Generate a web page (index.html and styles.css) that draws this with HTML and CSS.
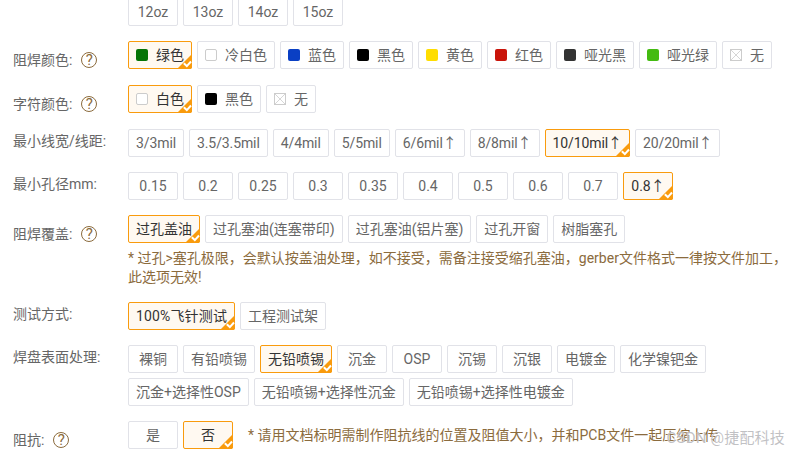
FILE: index.html
```html
<!DOCTYPE html>
<html lang="zh-CN">
<head>
<meta charset="utf-8">
<title>PCB 工艺参数</title>
<link rel="stylesheet" href="styles.css">
</head>
<body>
<svg class="defs" width="0" height="0" aria-hidden="true">
  <symbol id="none" viewBox="0 0 12 12"><rect x=".5" y=".5" width="11" height="11" fill="#fff" stroke="#ccc"/><path d="M1 1l10 10M11 1L1 11" stroke="#ccc" stroke-width=".8" fill="none"/></symbol>
  <symbol id="tick" viewBox="0 0 15 15"><path d="M15 0V13a2 2 0 0 1-2 2H0z" fill="#f99b0d"/><path d="M6.8 9.3l3 2.8 4.2-4.6" fill="none" stroke="#fff" stroke-width="2"/></symbol>
</svg>
<main class="form">
  <div class="row first">
    <div class="label"></div>
    <div class="opts">
      <button class="opt">12oz</button><button class="opt">13oz</button><button class="opt">14oz</button><button class="opt">15oz</button>
    </div>
  </div>
  <div class="row">
    <div class="label help-label">阻焊颜色:<span class="help">?</span></div>
    <div class="opts">
      <button class="opt on"><i class="sw green"></i>绿色<svg class="tick"><use href="#tick"/></svg></button>
      <button class="opt"><i class="sw white"></i>冷白色</button>
      <button class="opt"><i class="sw blue"></i>蓝色</button>
      <button class="opt"><i class="sw black"></i>黑色</button>
      <button class="opt"><i class="sw yellow"></i>黄色</button>
      <button class="opt"><i class="sw red"></i>红色</button>
      <button class="opt"><i class="sw matte"></i>哑光黑</button>
      <button class="opt"><i class="sw lime"></i>哑光绿</button>
      <button class="opt"><svg class="sw-x"><use href="#none"/></svg>无</button>
    </div>
  </div>
  <div class="row">
    <div class="label help-label">字符颜色:<span class="help">?</span></div>
    <div class="opts">
      <button class="opt on"><i class="sw white"></i>白色<svg class="tick"><use href="#tick"/></svg></button>
      <button class="opt"><i class="sw black"></i>黑色</button>
      <button class="opt"><svg class="sw-x"><use href="#none"/></svg>无</button>
    </div>
  </div>
  <div class="row">
    <div class="label">最小线宽/线距:</div>
    <div class="opts tight">
      <button class="opt">3/3mil</button><button class="opt">3.5/3.5mil</button><button class="opt">4/4mil</button><button class="opt">5/5mil</button><button class="opt">6/6mil↑</button><button class="opt">8/8mil↑</button><button class="opt on">10/10mil↑<svg class="tick"><use href="#tick"/></svg></button><button class="opt">20/20mil↑</button>
    </div>
  </div>
  <div class="row">
    <div class="label">最小孔径mm:</div>
    <div class="opts">
      <button class="opt">0.15</button><button class="opt">0.2</button><button class="opt">0.25</button><button class="opt">0.3</button><button class="opt">0.35</button><button class="opt">0.4</button><button class="opt">0.5</button><button class="opt">0.6</button><button class="opt">0.7</button><button class="opt on">0.8↑<svg class="tick"><use href="#tick"/></svg></button>
    </div>
  </div>
  <div class="row">
    <div class="label help-label">阻焊覆盖:<span class="help">?</span></div>
    <div class="col">
      <div class="opts">
        <button class="opt on">过孔盖油<svg class="tick"><use href="#tick"/></svg></button><button class="opt">过孔塞油(连塞带印)</button><button class="opt">过孔塞油(铝片塞)</button><button class="opt">过孔开窗</button><button class="opt">树脂塞孔</button>
      </div>
      <p class="note block">* 过孔&gt;塞孔极限，会默认按盖油处理，如不接受，需备注接受缩孔塞油，gerber文件格式一律按文件加工，此选项无效!</p>
    </div>
  </div>
  <div class="row">
    <div class="label">测试方式:</div>
    <div class="opts">
      <button class="opt on wide">100%飞针测试<svg class="tick"><use href="#tick"/></svg></button><button class="opt">工程测试架</button>
    </div>
  </div>
  <div class="row">
    <div class="label">焊盘表面处理:</div>
    <div class="opts">
      <button class="opt">裸铜</button><button class="opt">有铅喷锡</button><button class="opt on">无铅喷锡<svg class="tick"><use href="#tick"/></svg></button><button class="opt">沉金</button><button class="opt">OSP</button><button class="opt">沉锡</button><button class="opt">沉银</button><button class="opt">电镀金</button><button class="opt">化学镍钯金</button><button class="opt">沉金+选择性OSP</button><button class="opt">无铅喷锡+选择性沉金</button><button class="opt">无铅喷锡+选择性电镀金</button>
    </div>
  </div>
  <div class="row">
    <div class="label help-label">阻抗:<span class="help">?</span></div>
    <div class="opts">
      <button class="opt">是</button><button class="opt on">否<svg class="tick"><use href="#tick"/></svg></button>
      <p class="note inline">* 请用文档标明需制作阻抗线的位置及阻值大小，并和PCB文件一起压缩上传</p>
    </div>
  </div>
</main>
<div class="watermark">CSDN @捷配科技</div>
</body>
</html>
```

FILE: styles.css
```css
* { box-sizing: border-box; }
html, body { margin: 0; padding: 0; }
body {
  width: 792px;
  height: 452px;
  overflow: hidden;
  background: #fff;
  position: relative;
  font-family: Roboto, "Noto Sans CJK SC", sans-serif;
  font-size: 14px;
  color: #666;
}
.defs { position: absolute; }
.form {
  display: flex;
  flex-direction: column;
  gap: 15px;
  padding-left: 13px;
}
.row { display: flex; align-items: flex-start; }
.first { margin-top: -2px; }
.label {
  flex: none;
  width: 115px;
  padding-top: 2px;
  line-height: 20px;
  display: flex;
  align-items: center;
  color: #666;
}
.help-label { padding-top: 9px; }
.help {
  width: 16px;
  height: 16px;
  margin-left: 9px;
  border: 1px solid #8b6b3d;
  border-radius: 50%;
  color: #8b6b3d;
  font-size: 15px;
  line-height: 14px;
  text-align: center;
}
.col { width: 660px; }
.opts {
  display: flex;
  flex-wrap: wrap;
  gap: 5px;
  width: 650px;
}
.tight { letter-spacing: -.1px; }
.opt {
  position: relative;
  display: inline-flex;
  align-items: center;
  justify-content: center;
  min-width: 50px;
  height: 28px;
  padding: 0 7px;
  background: #fff;
  border: 1px solid #e1e2e8;
  border-radius: 2px;
  font: inherit;
  letter-spacing: inherit;
  color: #666;
  line-height: 26px;
  white-space: nowrap;
}
.opt.on {
  background: #fff9f1;
  border-color: #f99b0d;
  color: #333;
}
.wide { letter-spacing: .15px; }
.tick {
  position: absolute;
  right: -1px;
  bottom: -1px;
  width: 15px;
  height: 15px;
}
.sw {
  flex: none;
  width: 12px;
  height: 12px;
  margin-right: 8px;
  border-radius: 2px;
}
.sw-x { flex: none; width: 12px; height: 12px; margin-right: 8px; }
.green { background: #067406; }
.white { background: #fff; border: 1px solid #ccc; }
.blue { background: #0a3fc4; }
.black { background: #000; }
.yellow { background: #ffdd00; }
.red { background: #c9140a; }
.matte { background: #333; }
.lime { background: #44bb11; }
.note {
  margin: 0;
  font-size: 14px;
  line-height: 19px;
  color: #8b6b3d;
}
.note.block { margin-top: 6px; width: 660px; }
.note.inline { margin-left: 10px; line-height: 28px; white-space: nowrap; }
.watermark {
  position: absolute;
  right: 7px;
  bottom: 5px;
  font-size: 15px;
  line-height: 18px;
  letter-spacing: .2px;
  color: rgba(165, 165, 170, .7);
  text-shadow: 0 0 1px #fff;
}
```
